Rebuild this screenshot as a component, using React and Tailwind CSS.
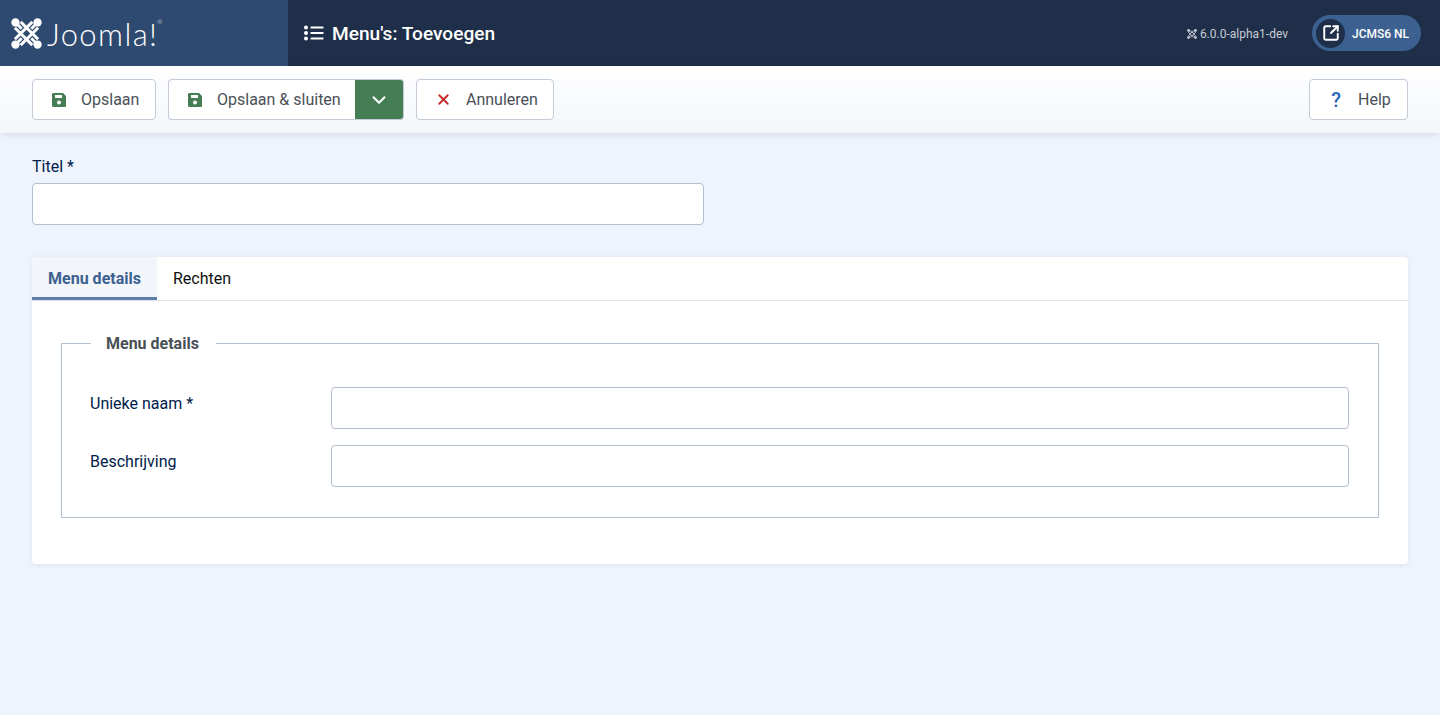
import React from 'react';
import { ChevronDown, X, SquareArrowOutUpRight } from 'lucide-react';

const JoomlaMark = ({ className }) => (
  <svg viewBox="0 0 32 32" className={className} fill="none">
    <g stroke="currentColor" strokeWidth="3">
      <path d="M4 10 L22 28" />
      <path d="M10 4 L28 22" />
      <path d="M28 10 L10 28" />
      <path d="M22 4 L4 22" />
      <path d="M5 5 L11 11" />
      <path d="M27 5 L21 11" />
      <path d="M5 27 L11 21" />
      <path d="M27 27 L21 21" />
    </g>
    <g fill="currentColor">
      <circle cx="4.6" cy="4.6" r="4.3" />
      <circle cx="27.4" cy="4.6" r="4.3" />
      <circle cx="4.6" cy="27.4" r="4.3" />
      <circle cx="27.4" cy="27.4" r="4.3" />
    </g>
  </svg>
);

const SaveIcon = () => (
  <svg viewBox="0 0 16 16" className="w-[16px] h-[16px] shrink-0 text-[#457d54]">
    <path fill="currentColor" fillRule="evenodd" d="M2 1h10l3 3v9.500a1.500 1.500 0 0 1-1.500 1.500h-11A1.500 1.500 0 0 1 1 13.500v-11A1.500 1.500 0 0 1 2 1zM4 3v3h7V3zM8 8.500a2 2 0 1 0 0 4 2 2 0 0 0 0-4z" />
  </svg>
);

const ListIcon = () => (
  <svg viewBox="0 0 20 16" className="w-[20px] h-[16px] text-white" fill="currentColor">
    <circle cx="2" cy="2.500" r="2" />
    <circle cx="2" cy="8" r="2" />
    <circle cx="2" cy="13.500" r="2" />
    <rect x="6.500" y="1.500" width="13" height="2" rx="0.500" />
    <rect x="6.500" y="7" width="13" height="2" rx="0.500" />
    <rect x="6.500" y="12.500" width="13" height="2" rx="0.500" />
  </svg>
);

const ToolbarButton = ({ icon, children, className = '' }) => (
  <button className={`h-[41px] flex items-center whitespace-nowrap bg-white border border-[#c3cbd6] rounded text-[#495057] text-[16px] pl-[18px] pr-[13px] gap-[14px] ${className}`}>
    {icon}
    <span>{children}</span>
  </button>
);

const FormRow = ({ label }) => (
  <div className="flex items-start">
    <label className="w-[241px] pt-[5px] text-[16px] leading-6 text-[#001b4c]">{label}</label>
    <input className="flex-1 h-[42px] bg-white border border-[#b2bfcd] rounded" />
  </div>
);

const App = () => {
  return (
    <div className="min-h-[715px] bg-[#eff4fc] font-['Roboto',sans-serif]">
      <header className="h-[66px] flex items-center bg-[#1f2f49] text-white">
        <div className="w-[288px] h-full bg-[#2f4a70] flex items-center pl-[11px] gap-[5px] self-stretch">
          <JoomlaMark className="w-[31px] h-[31px] text-white" />
          <span className="font-['Lato',sans-serif] font-light text-[31px] leading-none pt-[2px] tracking-[1.4px] relative">
            Joomla!
            <span className="absolute -right-[4px] top-[2px] text-[6px] tracking-normal">®</span>
          </span>
        </div>
        <div className="flex items-center pl-[16px] gap-[8px]">
          <ListIcon />
          <h1 className="text-[19.1px] font-medium pt-[2px]">Menu's: Toevoegen</h1>
        </div>
        <div className="ml-auto flex items-center pr-[19px]">
          <span className="flex items-center gap-[3px] text-[12px] text-[#c6ccd4] mr-[24px] pt-[1px]">
            <JoomlaMark className="w-[10px] h-[10px] text-[#c6ccd4]" />
            6.0.0-alpha1-dev
          </span>
          <div className="h-[36px] w-[109px] bg-[#3c6190] rounded-full flex items-center pl-[4px]">
            <span className="w-[29px] h-[29px] rounded-full bg-[#1f2f49] flex items-center justify-center">
              <SquareArrowOutUpRight size={18} strokeWidth={2.6} />
            </span>
            <span className="ml-[7px] pt-[1px] text-[12px] font-medium">JCMS6 NL</span>
          </div>
        </div>
      </header>

      <div className="h-[67px] flex items-center px-[32px] gap-[12px] bg-gradient-to-b from-white to-[#f3f6fb] shadow-[0_2px_6px_rgba(30,50,90,0.12)]">
        <ToolbarButton icon={<SaveIcon />} className="w-[124px]">Opslaan</ToolbarButton>
        <div className="flex">
          <ToolbarButton icon={<SaveIcon />} className="w-[187px] rounded-r-none border-r-0">Opslaan &amp; sluiten</ToolbarButton>
          <button className="w-[49px] h-[41px] bg-[#457d54] border border-[#c3cbd6] border-l-0 rounded-r flex items-center justify-center text-white">
            <ChevronDown size={22} strokeWidth={2.2} />
          </button>
        </div>
        <ToolbarButton icon={<X size={17} strokeWidth={2.5} className="shrink-0 text-[#c52827]" />} className="w-[138px] pl-[17px] gap-[14px]">Annuleren</ToolbarButton>
        <ToolbarButton icon={<span className="w-[16px] text-center text-[20px] leading-none font-medium text-[#2a69b8]">?</span>} className="w-[99px] ml-auto">Help</ToolbarButton>
      </div>

      <main className="px-[32px] pt-[22px]">
        <label className="block text-[16px] leading-6 text-[#001b4c] mb-[4px]">Titel *</label>
        <input className="block w-[672px] h-[42px] bg-white border border-[#b2bfcd] rounded" />

        <section className="mt-[32px] bg-white rounded shadow-[0_1px_6px_rgba(30,50,90,0.08)] h-[307px]">
          <div className="flex h-[44px] border-b border-[#dce4f0]">
            <div className="h-[43px] w-[125px] bg-[#f2f5fa] border-b-[3px] border-[#5d7fa9] pt-[3px] flex items-center justify-center text-[16px] font-bold text-[#3c6190] rounded-tl">
              Menu details
            </div>
            <div className="h-[43px] w-[90px] flex items-center justify-center text-[16px] text-[#0f0f0f]">
              Rechten
            </div>
          </div>
          <div className="px-[29px] pt-[29px]">
            <fieldset className="border border-[#b2bfcd] h-[188px] pl-[28px] pr-[29px] pt-[31px]">
              <legend className="ml-[1px] pl-[15px] pr-[17px] pt-[2px] text-[16px] font-bold leading-6 text-[#495057]">Menu details</legend>
              <div className="flex flex-col gap-[16px]">
                <FormRow label="Unieke naam *" />
                <FormRow label="Beschrijving" />
              </div>
            </fieldset>
          </div>
        </section>
      </main>
    </div>
  );
};

export default App;
